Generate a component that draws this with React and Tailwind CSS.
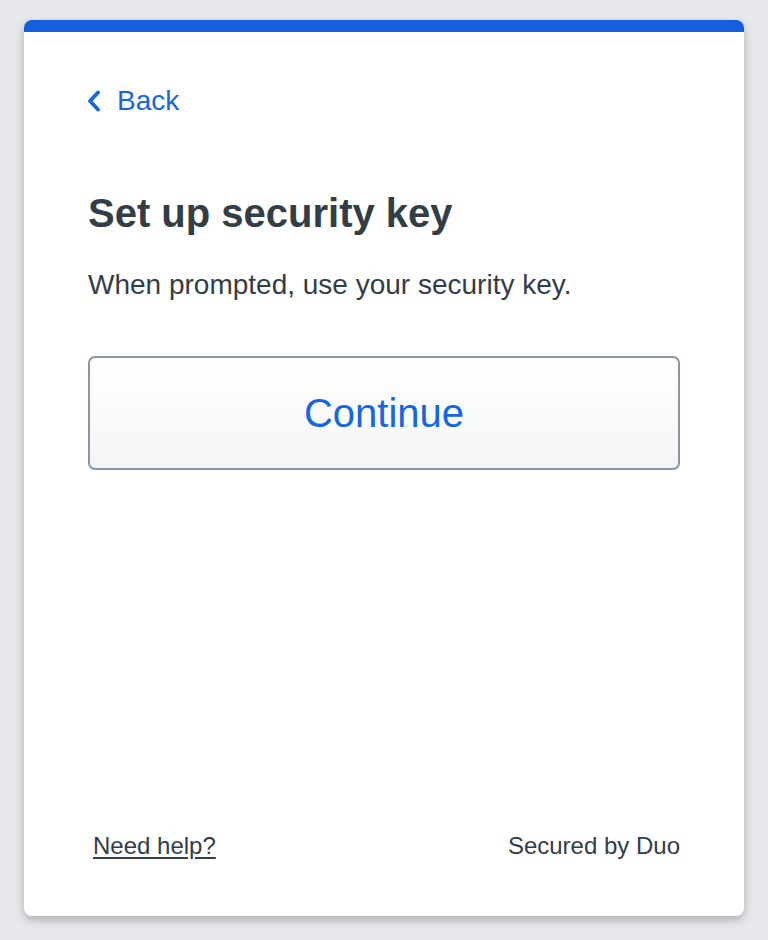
import React from 'react';

const font = { fontFamily: '"Liberation Sans", Arial, sans-serif' };

const ChevronLeft = () => (
  <svg width="16" height="22" viewBox="0 0 16 22" fill="none">
    <path d="M12 2.5 L4 11 L12 19.5" stroke="currentColor" strokeWidth="3.8" strokeLinecap="round" strokeLinejoin="round" />
  </svg>
);

const SecurityKeySetup = () => {
  return (
    <div className="min-h-screen bg-[#e7e8eb] pt-[20px] px-[24px]" style={font}>
      <div className="h-[896px] bg-white rounded-[8px] overflow-hidden shadow-[0_4px_10px_rgba(0,0,0,0.25)] flex flex-col">
        <div className="h-[12px] bg-[#155ede] shrink-0" />
        <div className="flex-1 flex flex-col px-[64px] pt-[53px] pb-[56px]">
          <button className="flex items-center gap-[15px] text-[#1467e0] text-[28px] leading-[32px] w-fit -ml-[2px]">
            <ChevronLeft />
            <span>Back</span>
          </button>
          <h1 className="mt-[72px] text-[40px] leading-[48px] font-bold text-[#333d46]">Set up security key</h1>
          <p className="mt-[30px] text-[28px] leading-[36px] text-[#333d46]">When prompted, use your security key.</p>
          <button className="mt-[53px] h-[114px] w-full rounded-[7px] border-2 border-[#8a96a2] bg-gradient-to-b from-white to-[#f4f5f7] text-[#1467e0] text-[40px]">
            Continue
          </button>
          <div className="mt-auto flex items-center justify-between text-[24px] leading-[28px] text-[#333d46]">
            <a href="#" className="underline underline-offset-[3px] ml-[5px]">Need help?</a>
            <span>Secured by Duo</span>
          </div>
        </div>
      </div>
    </div>
  );
};

export default function App() {
  return <SecurityKeySetup />;
}
